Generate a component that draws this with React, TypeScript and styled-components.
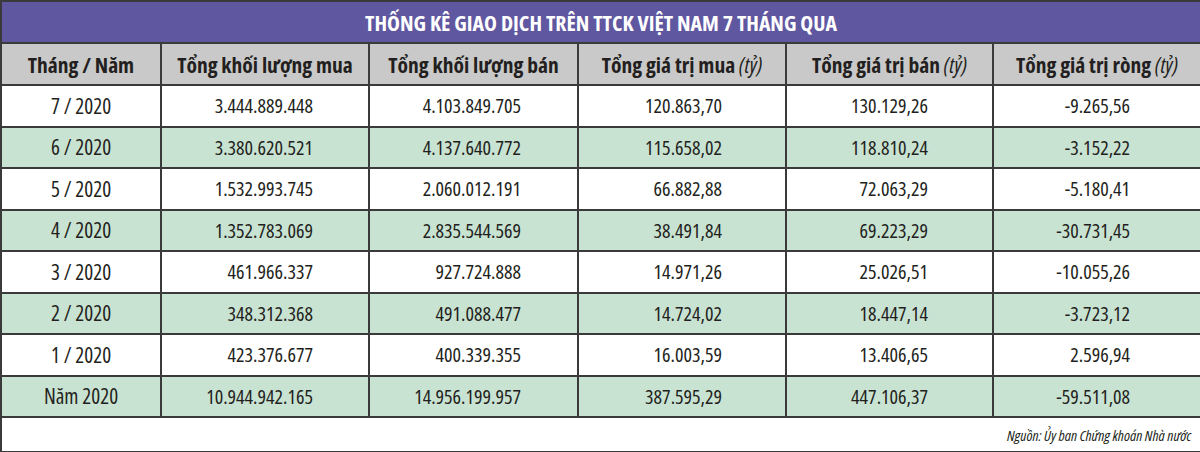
import React from "react";
import styled, { createGlobalStyle } from "styled-components";

const Global = createGlobalStyle`
  html, body { margin: 0; padding: 0; background: #ffffff; }
  body {
    font-family: "Open Sans", "DejaVu Sans Condensed", sans-serif;
    font-stretch: 75%;
    color: #231f20;
  }
`;

const Table = styled.table`
  width: 1200px;
  border-collapse: collapse;
  table-layout: fixed;
  border: 2px solid #3a3a3a;
`;

const TitleCell = styled.th`
  height: 40px;
  padding: 0;
  background: #5f579f;
  color: #ffffff;
  font-size: 21.8px;
  font-weight: bold;
  text-align: center;
  border: 2px solid #3a3a3a;
`;

const HeadCell = styled.th`
  height: 40px;
  padding: 0;
  background: #c9c9c9;
  font-size: 21.5px;
  font-weight: bold;
  text-align: center;
  border: 2px solid #3a3a3a;
  white-space: nowrap;
`;

const Unit = styled.i`
  font-weight: normal;
  font-style: italic;
`;

const Row = styled.tr<{ $green: boolean }>`
  height: 41.5px;
  background: ${(p) => (p.$green ? "#c9e3d3" : "#ffffff")};
`;

const Cell = styled.td<{ $pr: number; $center?: boolean }>`
  padding: 0 ${(p) => (p.$center ? 0 : p.$pr)}px 0 0;
  font-size: ${(p) => (p.$center ? 21 : 20)}px;
  text-align: ${(p) => (p.$center ? "center" : "right")};
  border: 2px solid #3a3a3a;
  white-space: nowrap;
`;

const SourceCell = styled.td`
  height: 33px;
  padding: 0 9px 0 0;
  text-align: right;
  font-size: 15px;
  font-style: italic;
  border: 2px solid #3a3a3a;
`;

const widths = [160, 208, 209, 208, 207, 208];
const pads = [0, 55, 56, 63, 64, 70];

const rows: string[][] = [
  ["7 / 2020", "3.444.889.448", "4.103.849.705", "120.863,70", "130.129,26", "-9.265,56"],
  ["6 / 2020", "3.380.620.521", "4.137.640.772", "115.658,02", "118.810,24", "-3.152,22"],
  ["5 / 2020", "1.532.993.745", "2.060.012.191", "66.882,88", "72.063,29", "-5.180,41"],
  ["4 / 2020", "1.352.783.069", "2.835.544.569", "38.491,84", "69.223,29", "-30.731,45"],
  ["3 / 2020", "461.966.337", "927.724.888", "14.971,26", "25.026,51", "-10.055,26"],
  ["2 / 2020", "348.312.368", "491.088.477", "14.724,02", "18.447,14", "-3.723,12"],
  ["1 / 2020", "423.376.677", "400.339.355", "16.003,59", "13.406,65", "2.596,94"],
  ["Năm 2020", "10.944.942.165", "14.956.199.957", "387.595,29", "447.106,37", "-59.511,08"],
];

export default function App() {
  return (
    <>
      <Global />
      <Table>
        <colgroup>
          {widths.map((w, i) => (
            <col key={i} style={{ width: w }} />
          ))}
        </colgroup>
        <thead>
          <tr>
            <TitleCell colSpan={6}>THỐNG KÊ GIAO DỊCH TRÊN TTCK VIỆT NAM 7 THÁNG QUA</TitleCell>
          </tr>
          <tr>
            <HeadCell>Tháng / Năm</HeadCell>
            <HeadCell>Tổng khối lượng mua</HeadCell>
            <HeadCell>Tổng khối lượng bán</HeadCell>
            <HeadCell>
              Tổng giá trị mua <Unit>(tỷ)</Unit>
            </HeadCell>
            <HeadCell>
              Tổng giá trị bán <Unit>(tỷ)</Unit>
            </HeadCell>
            <HeadCell>
              Tổng giá trị ròng <Unit>(tỷ)</Unit>
            </HeadCell>
          </tr>
        </thead>
        <tbody>
          {rows.map((r, i) => (
            <Row key={i} $green={i % 2 === 1}>
              {r.map((v, j) => (
                <Cell key={j} $pr={pads[j]} $center={j === 0}>
                  {v}
                </Cell>
              ))}
            </Row>
          ))}
          <tr>
            <SourceCell colSpan={6}>Nguồn: Ủy ban Chứng khoán Nhà nước</SourceCell>
          </tr>
        </tbody>
      </Table>
    </>
  );
}
